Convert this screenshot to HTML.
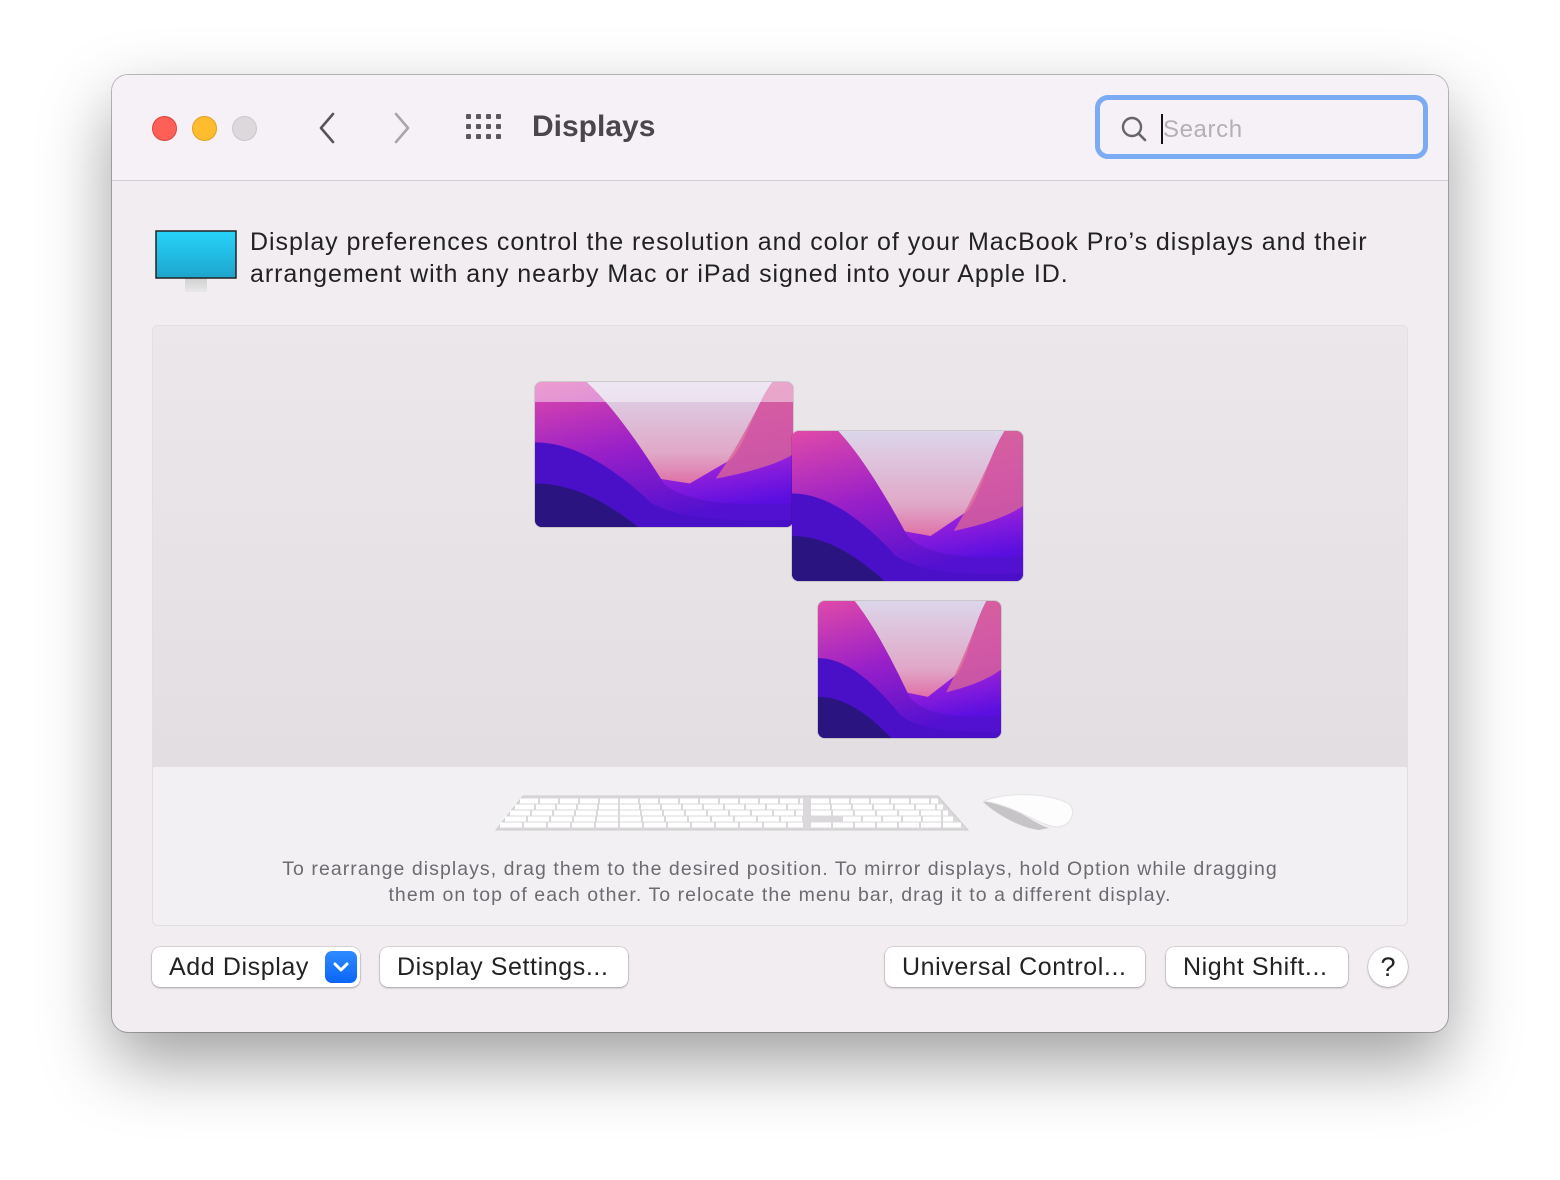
<!DOCTYPE html>
<html><head><meta charset="utf-8"><style>
*{margin:0;padding:0;box-sizing:border-box}
body{width:1560px;height:1180px;background:#fff;position:relative;overflow:hidden;font-family:"Liberation Sans",sans-serif}
.win{position:absolute;left:112px;top:75px;width:1336px;height:957px;border-radius:16px;background:#f1edf1;box-shadow:0 0 0 1px rgba(0,0,0,.25),0 30px 70px rgba(0,0,0,.38);overflow:hidden}
.tb{position:absolute;left:0;top:0;width:100%;height:106px;background:#f5f1f6;border-bottom:1px solid #d3d0d4}
.dot{position:absolute;top:41px;width:25px;height:25px;border-radius:50%}
.a{position:absolute}
.title{position:absolute;left:420px;top:35px;font-size:30px;font-weight:bold;color:#4a474c}
.search{position:absolute;left:983px;top:20px;width:333px;height:64px;border:5px solid #7aabf3;border-radius:13px;background:#f5f1f6}
.desc{position:absolute;left:138px;top:151px;font-size:25px;line-height:32px;color:#222;letter-spacing:.95px;white-space:nowrap}
.panel{position:absolute;left:40px;top:250px;width:1256px;height:601px;border-radius:6px;background:#f3f0f4;border:1px solid #e2dfe3;overflow:hidden}
.arr{position:absolute;left:0;top:0;width:100%;height:441px;background:linear-gradient(#ebe7eb,#e2dee2)}
.wp{position:absolute;border-radius:7px;overflow:hidden;box-shadow:0 0 0 1px rgba(0,0,0,.12)}
.wp svg{display:block;width:100%;height:100%}
.cap{position:absolute;left:0;width:100%;top:530px;text-align:center;font-size:19.5px;line-height:26px;color:#6e6b70;letter-spacing:1.05px;white-space:nowrap}
.btn{position:absolute;top:872px;height:40px;background:#fff;border-radius:8px;box-shadow:0 0 0 .5px rgba(0,0,0,.18),0 1px 2px rgba(0,0,0,.25);font-size:25px;line-height:40px;color:#222;padding-left:17px;letter-spacing:.6px;white-space:nowrap}
</style></head><body>
<div class="win">
 <div class="tb">
  <div class="dot" style="left:40px;background:#fe5f57;border:1px solid #e0443e"></div>
  <div class="dot" style="left:80px;background:#febc2e;border:1px solid #dea123"></div>
  <div class="dot" style="left:120px;background:#dcd8dc;border:1px solid #cbc7cb"></div>
  <svg class="a" style="left:205px;top:36px" width="20" height="34"><path d="M16 3 L4 17 L16 31" fill="none" stroke="#555" stroke-width="2.6" stroke-linecap="round" stroke-linejoin="round"/></svg>
  <svg class="a" style="left:280px;top:36px" width="20" height="34"><path d="M4 3 L16 17 L4 31" fill="none" stroke="#a9a6ab" stroke-width="2.6" stroke-linecap="round" stroke-linejoin="round"/></svg>
  <svg class="a" style="left:353px;top:38px" width="38" height="30" fill="#5b585d">
   <g><rect x="1" y="1" width="5" height="5" rx="1"/><rect x="11" y="1" width="5" height="5" rx="1"/><rect x="21" y="1" width="5" height="5" rx="1"/><rect x="31" y="1" width="5" height="5" rx="1"/>
   <rect x="1" y="11" width="5" height="5" rx="1"/><rect x="11" y="11" width="5" height="5" rx="1"/><rect x="21" y="11" width="5" height="5" rx="1"/><rect x="31" y="11" width="5" height="5" rx="1"/>
   <rect x="1" y="21" width="5" height="5" rx="1"/><rect x="11" y="21" width="5" height="5" rx="1"/><rect x="21" y="21" width="5" height="5" rx="1"/><rect x="31" y="21" width="5" height="5" rx="1"/></g></svg>
  <div class="title">Displays</div>
  <div class="search">
   <svg class="a" style="left:20px;top:15px" width="30" height="30"><circle cx="12" cy="12" r="9" fill="none" stroke="#666" stroke-width="2.4"/><path d="M18.5 18.5 L25 25" stroke="#666" stroke-width="2.6" stroke-linecap="round"/></svg>
   <div class="a" style="left:61px;top:14px;width:2px;height:30px;background:#111"></div>
   <div class="a" style="left:63px;top:16px;font-size:24px;color:#b3b0b4;letter-spacing:.6px">Search</div>
  </div>
 </div>
 <svg class="a" style="left:43px;top:155px" width="83" height="66">
  <defs><linearGradient id="sc" x1="0" y1="0" x2="0" y2="1"><stop offset="0" stop-color="#27d3fb"/><stop offset="1" stop-color="#1ea5cc"/></linearGradient><linearGradient id="st" x1="0" y1="0" x2="0" y2="1"><stop offset="0" stop-color="#ccc"/><stop offset="1" stop-color="#e8e8e8"/></linearGradient></defs>
  <rect x="30" y="46" width="22" height="16" fill="url(#st)"/>
  <rect x="1" y="1" width="80" height="47" fill="url(#sc)" stroke="#222" stroke-width="1.5"/>
 </svg>
 <div class="desc">Display preferences control the resolution and color of your MacBook Pro’s displays and their<br>arrangement with any nearby Mac or iPad signed into your Apple ID.</div>
 <div class="panel">
  <div class="arr"></div>
  <div class="wp" style="left:382px;top:56px;width:258px;height:145px"><svg viewBox="0 0 100 60" preserveAspectRatio="none"><use href="#wall"/></svg><div class="a" style="left:0;top:0;width:100%;height:20px;background:rgba(255,255,255,.45)"></div></div>
  <div class="wp" style="left:639px;top:105px;width:231px;height:150px"><svg viewBox="0 0 100 60" preserveAspectRatio="none"><use href="#wall"/></svg></div>
  <div class="wp" style="left:665px;top:275px;width:183px;height:137px"><svg viewBox="0 0 100 60" preserveAspectRatio="none"><use href="#wall"/></svg></div>
  <svg class="a" style="left:340px;top:468px" width="480" height="40">
   <path d="M30 2 H445 L475 36 H3 Z" fill="#dad8da" stroke="#ccc" stroke-width="1"/>
   <g stroke="#fff" stroke-width="5" fill="none">
    <path d="M27 7 H310" stroke-dasharray="18 2"/><path d="M318 7 H445" stroke-dasharray="18 2"/>
    <path d="M22 13 H310" stroke-dasharray="19 2"/><path d="M318 13 H450" stroke-dasharray="19 2"/>
    <path d="M17 19 H310" stroke-dasharray="20 2"/><path d="M318 19 H455" stroke-dasharray="20 2"/>
    <path d="M12 25 H310" stroke-dasharray="21 2"/><path d="M350 25 H460" stroke-dasharray="18 2"/>
    <path d="M7 31 H310" stroke-dasharray="22 2"/><path d="M318 31 H468" stroke-dasharray="20 2"/>
   </g>
  </svg>
  <svg class="a" style="left:826px;top:466px" width="100" height="40">
   <path d="M4 10 C30 8 50 30 70 36 L60 38 C40 36 15 20 4 10Z" fill="#c6c4c6"/>
   <path d="M5 9 C25 0 70 0 90 12 C98 20 92 34 78 35 C60 34 40 15 5 9Z" fill="#fdfdfd" stroke="#e4e2e4"/>
  </svg>
  <div class="cap">To rearrange displays, drag them to the desired position. To mirror displays, hold Option while dragging<br>them on top of each other. To relocate the menu bar, drag it to a different display.</div>
 </div>
 <div class="btn" style="left:40px;width:208px">Add Display
  <div class="a" style="left:173px;top:4px;width:32px;height:32px;border-radius:7px;background:linear-gradient(#2f8bff,#0a66f5)"><svg width="32" height="32"><path d="M10 13 L16 19 L22 13" fill="none" stroke="#fff" stroke-width="3" stroke-linecap="round" stroke-linejoin="round"/></svg></div></div>
 <div class="btn" style="left:268px;width:248px">Display Settings...</div>
 <div class="btn" style="left:773px;width:260px">Universal Control...</div>
 <div class="btn" style="left:1054px;width:182px">Night Shift...</div>
 <div class="btn" style="left:1256px;width:40px;border-radius:50%;padding:0;text-align:center;font-size:27px;letter-spacing:0">?</div>
</div>
<svg width="0" height="0" style="position:absolute">
 <defs>
  <linearGradient id="bg" x1="0" y1="0" x2="0.3" y2="1"><stop offset="0" stop-color="#dc6aa8"/><stop offset=".6" stop-color="#b528d8"/><stop offset="1" stop-color="#5a0fe0"/></linearGradient>
  <linearGradient id="lt" x1="0" y1="0" x2="0" y2="1"><stop offset="0" stop-color="#dcd6ea"/><stop offset=".7" stop-color="#e0a8c8"/><stop offset="1" stop-color="#e070a8"/></linearGradient>
  <linearGradient id="lf" x1="0" y1="0" x2="0.4" y2="1"><stop offset="0" stop-color="#e04aa8"/><stop offset=".5" stop-color="#9a20c8"/><stop offset="1" stop-color="#5210d0"/></linearGradient>
  <g id="wall">
   <rect width="100" height="60" fill="url(#bg)"/>
   <path d="M20 0 H92 C85 10 82 25 76 32 L60 42 L48 40 C40 25 30 10 20 0Z" fill="url(#lt)"/>
   <path d="M92 0 H100 V30 C92 35 80 38 70 40 C80 25 86 10 92 0Z" fill="#d86498" opacity=".8"/>
   <path d="M0 0 H20 C30 10 40 25 50 42 C56 48 70 52 100 50 V60 H0Z" fill="url(#lf)"/>
   <path d="M0 25 C15 25 30 35 45 50 C55 56 70 58 100 57 V60 H0Z" fill="#4a10c8"/>
   <path d="M0 42 C15 42 28 50 40 60 H0Z" fill="#2a1480"/>
  </g>
 </defs>
</svg>
</body></html>
